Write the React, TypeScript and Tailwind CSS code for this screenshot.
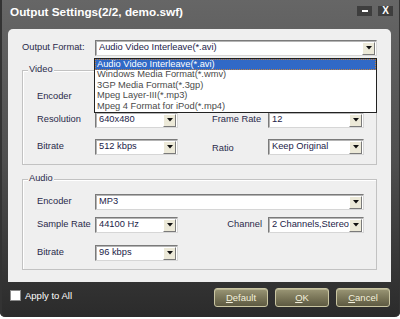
import React from "react";

const Arrow = () => (
  <div className="w-[13px] h-[13px] bg-[#ece9d8] border border-t-white border-l-white border-r-[#7a7a7a] border-b-[#7a7a7a] flex items-center justify-center shrink-0">
    <svg width="6" height="4" viewBox="0 0 6 4">
      <path d="M0 0 H6 L3 3.5 Z" fill="#111" />
    </svg>
  </div>
);

function Select({ value, width }: { value: string; width: string }) {
  return (
    <div
      className={`${width} h-[16px] bg-white border border-t-[#7a7a7a] border-l-[#7a7a7a] border-r-[#d6d6d6] border-b-[#d6d6d6] shadow-[inset_1px_1px_0_#b4b4b4] flex items-center pl-[3px] pr-[1px] shrink-0`}
    >
      <span className="flex-1 truncate text-[#1c1c48] leading-none">{value}</span>
      <Arrow />
    </div>
  );
}

const Label = ({ children, className = "" }: { children: React.ReactNode; className?: string }) => (
  <span className={`text-[#2a2a4a] leading-none shrink-0 ${className}`}>{children}</span>
);

const formats = [
  "Audio Video Interleave(*.avi)",
  "Windows Media Format(*.wmv)",
  "3GP Media Format(*.3gp)",
  "Mpeg Layer-III(*.mp3)",
  "Mpeg 4 Format for iPod(*.mp4)",
];

function DialogButton({ text }: { text: string }) {
  return (
    <button className="w-[54px] h-[19px] rounded-[3px] border border-[#c9c5a2] bg-gradient-to-b from-[#9a9676] via-[#7b7759] to-[#5e5a42] text-[#f3f0dc] text-[9.5px] leading-none shadow-[inset_0_1px_0_#b8b492]">
      <span className="underline">{text[0]}</span>
      {text.slice(1)}
    </button>
  );
}

export default function App() {
  return (
    <div className="w-[400px] h-[319px] bg-white font-['Liberation_Sans',Arial,sans-serif] text-[9.3px] overflow-hidden">
      <div className="h-[317px] rounded-b-[5px] bg-gradient-to-b from-[#666666] via-[#4f4f4f] to-[#2b2b2b] shadow-[inset_2px_0_0_#333,inset_-1px_0_0_#333] flex flex-col">
        {/* Title bar */}
        <div className="h-[29px] flex items-start pl-[10px] pr-[7px] pt-[5px] shrink-0">
          <span className="text-white font-bold text-[11.75px] leading-[14px]">Output Settings(2/2, demo.swf)</span>
          <div className="ml-auto flex gap-[6px] pt-[1px]">
            <div className="w-[15px] h-[10px] bg-[#3e3e3e] flex items-center justify-center">
              <div className="w-[6px] h-[2px] bg-white" />
            </div>
            <div className="w-[15px] h-[10px] bg-[#3e3e3e] flex items-center justify-center text-white font-bold text-[10px] leading-none">
              X
            </div>
          </div>
        </div>

        {/* Panel */}
        <div className="relative ml-[8px] w-[383px] h-[253px] bg-[#efefef] rounded-t-[5px] shrink-0 pl-[14px]">
          <div className="pt-[11px] flex items-center h-[27px]">
            <Label className="w-[73px]">Output Format:</Label>
            <Select value="Audio Video Interleave(*.avi)" width="w-[282px]" />
          </div>

          {/* Video */}
          <div className="relative mt-[14px] w-[355px] h-[95px] border border-[#c2c2c2] shadow-[inset_1px_1px_0_#fff] pl-[14px] pt-[18px]">
            <span className="absolute left-[5px] top-[-6px] bg-[#efefef] px-[1px] text-[#2a2a4a] leading-none">Video</span>
            <div className="flex items-center h-[16px]">
              <Label className="w-[58px]">Encoder</Label>
              <Select value="" width="w-[269px]" />
            </div>
            <div className="flex items-center h-[16px] mt-[7px]">
              <Label className="w-[58px]">Resolution</Label>
              <Select value="640x480" width="w-[83px]" />
              <Label className="w-[56px] ml-[34px]">Frame Rate</Label>
              <Select value="12" width="w-[96px]" />
            </div>
            <div className="flex items-center h-[16px] mt-[11px]">
              <Label className="w-[58px]">Bitrate</Label>
              <Select value="512 kbps" width="w-[83px]" />
              <Label className="w-[56px] ml-[34px] pt-[3px]">Ratio</Label>
              <Select value="Keep Original" width="w-[96px]" />
            </div>
          </div>

          {/* Audio */}
          <div className="relative mt-[14px] w-[355px] h-[91px] border border-[#c2c2c2] shadow-[inset_1px_1px_0_#fff] pl-[14px] pt-[14px]">
            <span className="absolute left-[5px] top-[-6px] bg-[#efefef] px-[1px] text-[#2a2a4a] leading-none">Audio</span>
            <div className="flex items-center h-[16px]">
              <Label className="w-[58px]">Encoder</Label>
              <Select value="MP3" width="w-[269px]" />
            </div>
            <div className="flex items-center h-[16px] mt-[7px]">
              <Label className="w-[58px]">Sample Rate</Label>
              <Select value="44100 Hz" width="w-[83px]" />
              <Label className="w-[56px] ml-[34px] text-right pr-[6px]">Channel</Label>
              <Select value="2 Channels,Stereo" width="w-[96px]" />
            </div>
            <div className="flex items-center h-[16px] mt-[12px]">
              <Label className="w-[58px]">Bitrate</Label>
              <Select value="96 kbps" width="w-[83px]" />
            </div>
          </div>

          {/* Open dropdown list */}
          <div className="absolute left-[86px] top-[29px] w-[283px] h-[55px] bg-white border border-[#222] z-10 flex flex-col">
            {formats.map((f, i) => (
              <div
                key={f}
                className={`h-[10.6px] flex items-center pl-[2px] leading-none ${
                  i === 0 ? "bg-[#3169c6] text-white outline outline-1 outline-dotted outline-[#c08040] -outline-offset-1" : "text-[#4a4a4a]"
                }`}
              >
                {f}
              </div>
            ))}
          </div>
        </div>

        {/* Bottom bar */}
        <div className="flex items-start pl-[10px] pr-[10px]">
          <div className="flex items-center mt-[8px]">
            <div className="w-[11px] h-[11px] bg-white border border-[#8a8a8a]" />
            <span className="ml-[4px] text-white text-[9.5px] leading-none">Apply to All</span>
          </div>
          <div className="ml-auto flex gap-[7px] mt-[6px]">
            <DialogButton text="Default" />
            <DialogButton text="OK" />
            <DialogButton text="Cancel" />
          </div>
        </div>
      </div>
    </div>
  );
}
